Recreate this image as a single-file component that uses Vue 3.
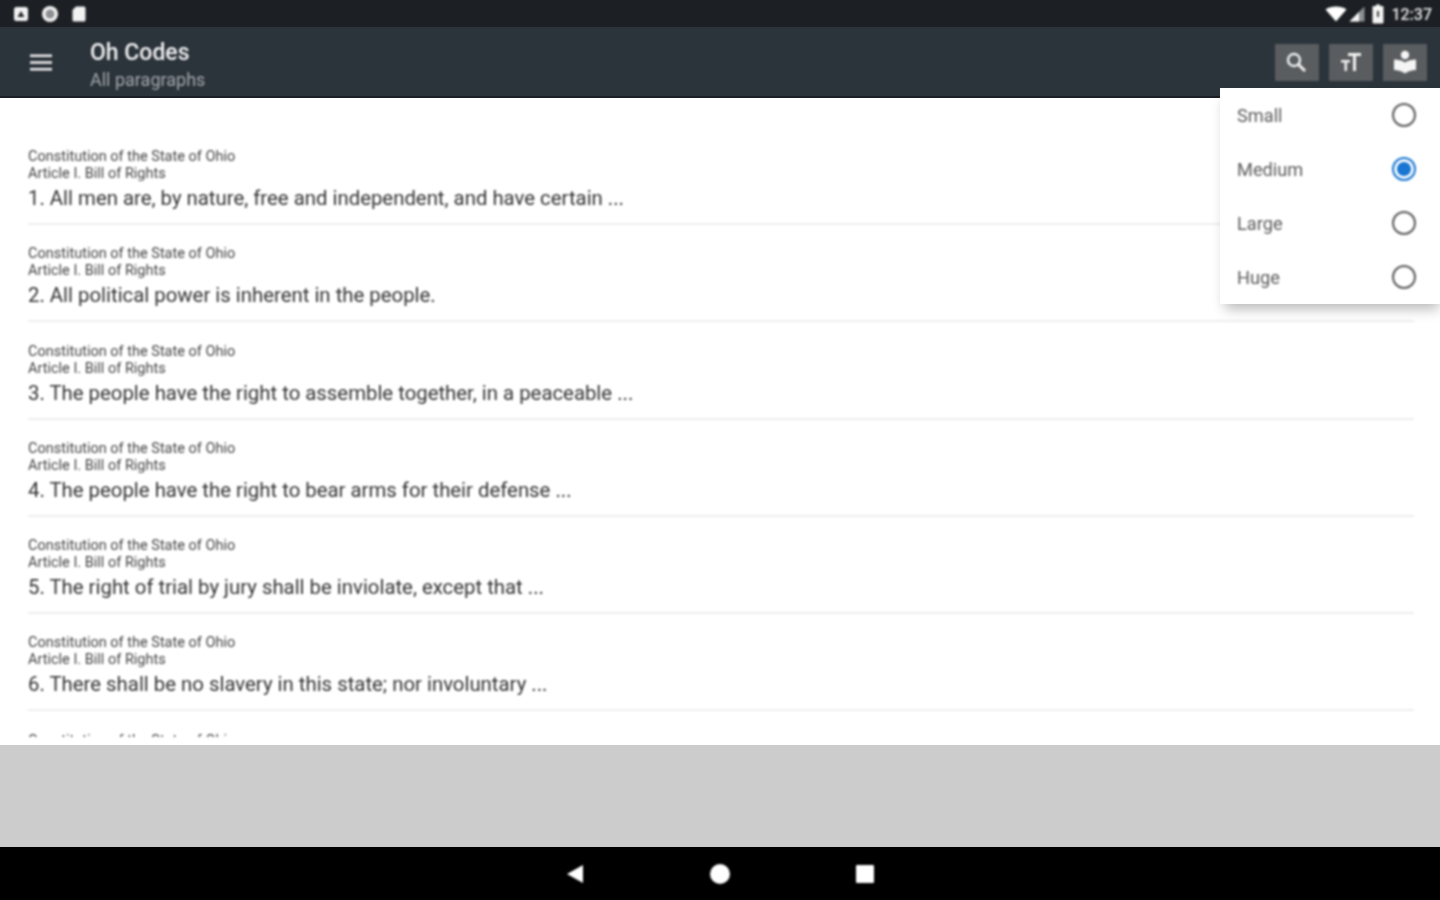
<script setup>
const paragraphs = [
  '1. All men are, by nature, free and independent, and have certain ...',
  '2. All political power is inherent in the people.',
  '3. The people have the right to assemble together, in a peaceable ...',
  '4. The people have the right to bear arms for their defense ...',
  '5. The right of trial by jury shall be inviolate, except that ...',
  '6. There shall be no slavery in this state; nor involuntary ...',
]

const sizes = [
  { label: 'Small', checked: false },
  { label: 'Medium', checked: true },
  { label: 'Large', checked: false },
  { label: 'Huge', checked: false },
]
</script>

<template>
  <div class="screen">
    <!-- status bar -->
    <div class="statusbar">
      <div class="status-left soft">
        <svg width="16" height="16" viewBox="0 0 16 16">
          <rect x="1" y="1" width="14" height="14" rx="2.5" fill="#f2f2f2"/>
          <path d="M4.5 11 8 5l3.500 6z" fill="#22262a"/>
        </svg>
        <svg width="18" height="18" viewBox="0 0 18 18">
          <circle cx="9" cy="9" r="8" fill="#f2f2f2"/>
          <circle cx="9" cy="9" r="4.500" fill="#8d9093"/>
        </svg>
        <svg width="16" height="18" viewBox="0 0 16 18">
          <path d="M5 1.500h8a1.500 1.500 0 0 1 1.500 1.500v12a1.500 1.500 0 0 1-1.500 1.500H3A1.500 1.500 0 0 1 1.500 15V5z" fill="#f2f2f2"/>
        </svg>
      </div>
      <div class="status-right soft">
        <svg class="wifi" width="22" height="16" viewBox="0 0 22 16">
          <path d="M0.500 3.500C3.500 1.200 7 0.500 11 0.500s7.500 0.700 10.500 3L11 15.500z" fill="#fff"/>
        </svg>
        <svg class="signal" width="16" height="16" viewBox="0 0 16 16">
          <path d="M0.500 15.500 15.500 0.500v15z" fill="#8d9093"/>
          <path d="M0.500 15.500 10 6v9.500z" fill="#f5f5f5"/>
        </svg>
        <svg class="battery" width="12" height="20" viewBox="0 0 12 20">
          <path d="M4 0.500h4v1.500h2.500a1 1 0 0 1 1 1v15.500a1 1 0 0 1-1 1h-9a1 1 0 0 1-1-1V3a1 1 0 0 1 1-1H4z" fill="#f5f5f5"/>
          <rect x="5" y="7" width="2" height="6" fill="#444"/>
        </svg>
        <span class="clock">12:37</span>
      </div>
    </div>

    <!-- toolbar -->
    <header class="toolbar">
      <svg class="menu-icon soft" width="22" height="18" viewBox="0 0 22 18">
        <path d="M0 1.500h22v2.600H0zM0 8.200h22v2.600H0zM0 15h22v2.600H0z" fill="#f2f2f2"/>
      </svg>
      <div class="titles soft">
        <div class="title">Oh Codes</div>
        <div class="subtitle">All paragraphs</div>
      </div>
      <div class="actions soft">
        <button class="action">
          <svg class="search" width="24" height="24" viewBox="0 0 24 24" fill="none" stroke="#f0f0f0">
            <circle cx="10" cy="10" r="6" stroke-width="2.400"/>
            <path d="M14.500 14.500 21 21" stroke-width="3"/>
          </svg>
        </button>
        <button class="action">
          <svg width="24" height="24" viewBox="0 0 24 24" fill="#f0f0f0">
            <path d="M9 3h13v3h-5v15h-3V6H9zM2 10h9v2.500H8V21H5.500v-8.500H2z"/>
          </svg>
        </button>
        <button class="action">
          <svg width="26" height="26" viewBox="0 0 26 26" fill="#f5f5f5">
            <circle cx="13" cy="6" r="4.200"/>
            <path d="M2 10.500c4 0 8 .8 11 3 3-2.200 7-3 11-3V21c-4 0-8 1.500-11 3.500C10 22.500 6 21 2 21z"/>
          </svg>
        </button>
      </div>
    </header>

    <!-- paragraph list -->
    <main class="content">
      <ul class="list soft">
        <li v-for="(text, i) in paragraphs" :key="i" class="row">
          <div class="meta">Constitution of the State of Ohio</div>
          <div class="meta">Article I. Bill of Rights</div>
          <div class="text">{{ text }}</div>
        </li>
        <li class="row">
          <div class="meta">Constitution of the State of Ohio</div>
        </li>
      </ul>
    </main>

    <div class="empty" />

    <!-- nav bar -->
    <nav class="navbar">
      <svg class="soft" width="18" height="20" viewBox="0 0 18 20">
        <path d="M17 1v18L1 10z" fill="#fff"/>
      </svg>
      <svg class="soft" width="20" height="20" viewBox="0 0 20 20">
        <circle cx="10" cy="10" r="10" fill="#fff"/>
      </svg>
      <svg class="soft" width="18" height="18" viewBox="0 0 18 18">
        <rect width="18" height="18" rx="1" fill="#fff"/>
      </svg>
    </nav>

    <!-- text size popup -->
    <div class="popup">
      <div v-for="s in sizes" :key="s.label" class="popup-row soft">
        <span class="popup-label">{{ s.label }}</span>
        <span class="radio" :class="{ checked: s.checked }" />
      </div>
    </div>
  </div>
</template>

<style scoped>
.screen {
  position: relative;
  width: 1440px;
  height: 900px;
  display: flex;
  flex-direction: column;
  overflow: hidden;
  background: #fff;
  font-family: Roboto, "Liberation Sans", sans-serif;
}

/* the reference is an upscaled capture, text and icons are smeared */
.soft { filter: blur(0.8px); }

.statusbar {
  height: 27px;
  flex-shrink: 0;
  display: flex;
  align-items: center;
  justify-content: space-between;
  padding: 0 8px 0 13px;
  background: #1c1f23;
}
.status-left { display: flex; align-items: center; gap: 12px; }
.status-right { display: flex; align-items: center; }
.wifi { margin-right: 2px; }
.signal { margin-right: 7px; }
.battery { margin-right: 7px; }
.clock { color: #e8e8e8; font-size: 16px; font-weight: 500; margin-top: 1px; }

.toolbar {
  height: 71px;
  flex-shrink: 0;
  display: flex;
  align-items: center;
  padding: 0 13px 0 30px;
  background: #2b333b;
  border-bottom: 2px solid #1a2026;
  box-sizing: border-box;
}
.menu-icon { margin-right: 38px; margin-top: 1px; }
.titles { margin-top: 6px; }
.title { color: #f2f2f2; font-size: 23px; font-weight: 500; line-height: 30px; }
.subtitle { color: #a4a9ad; font-size: 18px; line-height: 23px; }
.actions { margin-left: auto; display: flex; gap: 10px; margin-top: 1px; }
.action {
  width: 44px;
  height: 37px;
  padding: 0;
  border: none;
  display: flex;
  align-items: center;
  justify-content: center;
  background: #5a5d60;
}
.search { margin-right: 3px; }

.content {
  height: 647px;
  flex-shrink: 0;
  box-sizing: border-box;
  padding: 50px 26px 8px 28px;
  background: #fff;
}
.list {
  list-style: none;
  margin: 0;
  padding: 0;
  height: 100%;
  overflow: hidden;
}
.row {
  height: 97.300px;
  box-sizing: border-box;
}
.row:not(:last-child) .text::after {
  content: "";
  display: block;
  height: 2px;
  margin-top: 12px;
  background: #eeeeee;
}
.meta { font-size: 14.500px; line-height: 17px; color: #444; white-space: nowrap; }
.text { font-size: 20.350px; line-height: 26px; margin-top: 3px; color: #333; }

.empty { flex: 1; background: #cccccc; }

.navbar {
  height: 53px;
  flex-shrink: 0;
  display: flex;
  align-items: center;
  justify-content: center;
  gap: 126px;
  background: #000;
}

.popup {
  position: absolute;
  top: 88px;
  right: 0;
  width: 220px;
  height: 216px;
  background: #fff;
  box-shadow: 2px 8px 12px -3px rgba(0, 0, 0, 0.28);
}
.popup-row {
  height: 54px;
  display: flex;
  align-items: center;
  justify-content: space-between;
  padding: 0 24px 0 17px;
}
.popup-label { font-size: 18.200px; color: #5a5a5a; }
.radio {
  width: 24px;
  height: 24px;
  box-sizing: border-box;
  border: 2.500px solid #5c5c5c;
  border-radius: 50%;
}
.radio.checked {
  border-color: #1976d2;
  background: radial-gradient(circle, #1976d2 0 6.500px, transparent 7.500px);
}
</style>
